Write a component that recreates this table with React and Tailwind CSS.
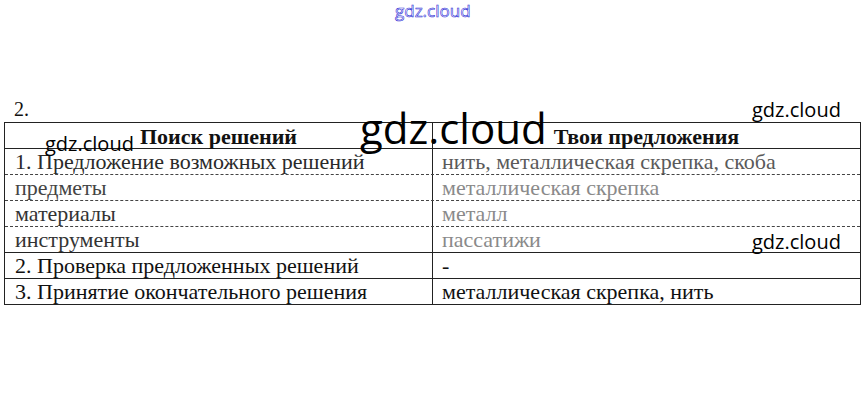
const rows = [
  { left: "1. Предложение возможных решений", right: "нить, металлическая скрепка, скоба", lc: "text-[#2a2a2a]", rc: "text-[#5a5a5a]", line: "border-[#222]" },
  { left: "предметы", right: "металлическая скрепка", lc: "text-[#444]", rc: "text-[#8a8a8a]", line: "border-dashed border-[#444]" },
  { left: "материалы", right: "металл", lc: "text-[#333]", rc: "text-[#8a8a8a]", line: "border-dashed border-[#444]" },
  { left: "инструменты", right: "пассатижи", lc: "text-[#333]", rc: "text-[#8a8a8a]", line: "border-dashed border-[#444]" },
  { left: "2. Проверка предложенных решений", right: "-", lc: "text-[#111]", rc: "text-[#111]", line: "border-[#222]" },
  { left: "3. Принятие окончательного решения", right: "металлическая скрепка, нить", lc: "text-[#111]", rc: "text-[#111]", line: "border-[#222]" },
];

// watermark overlays
const Mark = ({ className }) => (
  <span
    className={`absolute leading-none text-black font-['Open_Sans',sans-serif] ${className}`}
  >
    gdz.cloud
  </span>
);

export default function App() {
  return (
    <div className="relative w-[867px] h-[398px] bg-white overflow-hidden font-['Liberation_Serif',serif] text-[#111]">
      <div className="pt-[96px] pl-[4px]">
        <div className="pl-[10px] h-[26px] text-[20px] leading-[26px]">2.</div>
        <div className="w-[857px] border border-[#222] text-[22px]">
          <div className="flex h-[25px] font-bold">
            <div className="w-[427px] text-center leading-[27px]">Поиск решений</div>
            <div className="flex-1 border-l border-[#222] text-center leading-[27px]">
              Твои предложения
            </div>
          </div>
          {rows.map((r) => (
            <div key={r.left} className={`flex h-[26px] border-t ${r.line}`}>
              <div className={`w-[427px] pl-[10px] leading-[26px] whitespace-nowrap ${r.lc}`}>
                {r.left}
              </div>
              <div className={`flex-1 border-l border-[#222] pl-[9px] leading-[26px] whitespace-nowrap ${r.rc}`}>
                {r.right}
              </div>
            </div>
          ))}
        </div>
      </div>

      <span className="absolute left-[395px] top-[2px] text-[17px] leading-none text-transparent font-['Open_Sans',sans-serif] [-webkit-text-stroke:0.6px_#2b2bd6]">
        gdz.cloud
      </span>
      <Mark className="left-[360px] top-[107px] text-[42px]" />
      <Mark className="left-[45px] top-[134px] text-[20px]" />
      <Mark className="left-[752px] top-[100px] text-[20px]" />
      <Mark className="left-[752px] top-[232px] text-[20px]" />
    </div>
  );
}
